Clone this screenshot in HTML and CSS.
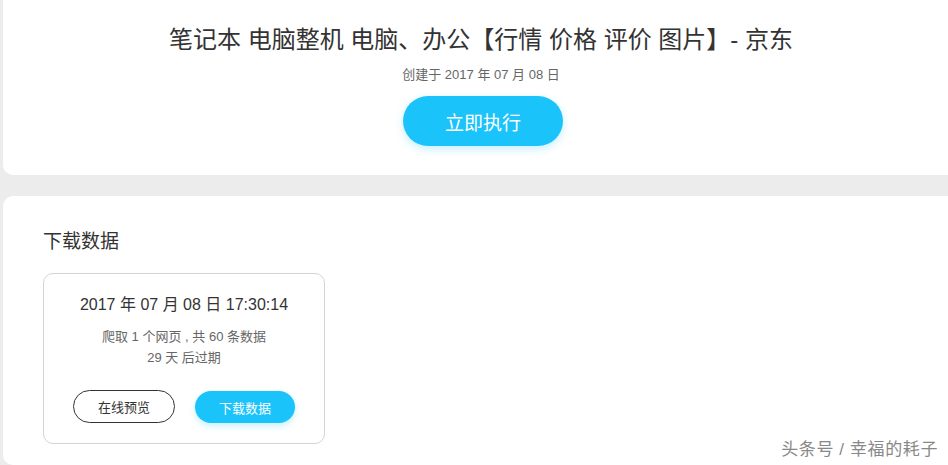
FILE: index.html
```html
<!DOCTYPE html>
<html lang="zh-CN">

<head>
  <meta charset="UTF-8">
  <meta name="viewport" content="width=device-width, initial-scale=1.0">
  <title>笔记本 电脑整机 电脑、办公 - 京东</title>
  <link rel="stylesheet" href="styles.css">
</head>

<body>
  <div class="page">
    <div class="card task">
      <h1 class="task-title">笔记本 电脑整机 电脑、办公【行情 价格 评价 图片】- 京东</h1>
      <p class="task-date">创建于 2017 年 07 月 08 日</p>
      <button class="run-btn">立即执行</button>
    </div>

    <div class="card data">
      <h2 class="data-title">下载数据</h2>
      <div class="run-item">
        <div class="run-time">2017 年 07 月 08 日 17:30:14</div>
        <div class="run-info">爬取 1 个网页 , 共 60 条数据</div>
        <div class="run-info">29 天 后过期</div>
        <div class="run-actions">
          <button class="btn btn-line">在线预览</button>
          <button class="btn btn-blue">下载数据</button>
        </div>
      </div>
    </div>
  </div>
  <div class="watermark">头条号 / 幸福的耗子</div>
</body>

</html>
```

FILE: styles.css
```css
* {
  box-sizing: border-box;
}

body {
  margin: 0;
  background: #ececec;
  font-family: "Liberation Sans", "Noto Sans CJK SC", sans-serif;
  color: #333;
  overflow: hidden;
  height: 465px;
}

.page {
  padding-left: 3px;
  margin-right: -20px;
}

.card {
  background: #fff;
  border-radius: 10px;
}

/* top card */
.task {
  margin-top: -10px;
  padding: 34px 9px 29px 0;
  display: flex;
  flex-direction: column;
  align-items: center;
}

.task-title {
  margin: 0;
  font-size: 24px;
  line-height: 32px;
  font-weight: normal;
  color: #333;
}

.task-date {
  margin: 10px 0 0;
  font-size: 13px;
  line-height: 18px;
  color: #666;
}

.run-btn {
  margin: 12px 0 0 4px;
  width: 160px;
  height: 50px;
  border: none;
  border-radius: 25px;
  background: #1bc3fb;
  color: #fff;
  font-family: inherit;
  font-size: 19px;
  box-shadow: 0 3px 8px rgba(27, 195, 251, 0.25);
}

/* data card */
.data {
  margin-top: 21px;
  padding: 33px 40px 20px;
  min-height: 269px;
}

.data-title {
  margin: 0;
  font-size: 19px;
  line-height: 26px;
  font-weight: normal;
  color: #333;
}

.run-item {
  margin-top: 18px;
  width: 282px;
  border: 1px solid #d4d4d4;
  border-radius: 10px;
  padding: 20px 0 20px;
  text-align: center;
}

.run-time {
  font-size: 16px;
  line-height: 22px;
  color: #333;
  margin-bottom: 10px;
}

.run-info {
  font-size: 13px;
  line-height: 21px;
  color: #666;
}

.run-actions {
  margin-top: 22px;
  display: flex;
  justify-content: center;
  gap: 20px;
}

.btn {
  height: 33px;
  border-radius: 17px;
  font-family: inherit;
  font-size: 13px;
}

.btn-line {
  width: 102px;
  background: #fff;
  border: 1px solid #333;
  color: #333;
}

.btn-blue {
  width: 100px;
  height: 32px;
  margin-top: 1px;
  background: #1bc3fb;
  border: none;
  color: #fff;
  box-shadow: 0 3px 6px rgba(27, 195, 251, 0.25);
}

.watermark {
  position: absolute;
  right: 10px;
  top: 438px;
  font-size: 17px;
  letter-spacing: 0.6px;
  line-height: 24px;
  color: #888;
  text-shadow: 0 0 2px #fff;
}
```
